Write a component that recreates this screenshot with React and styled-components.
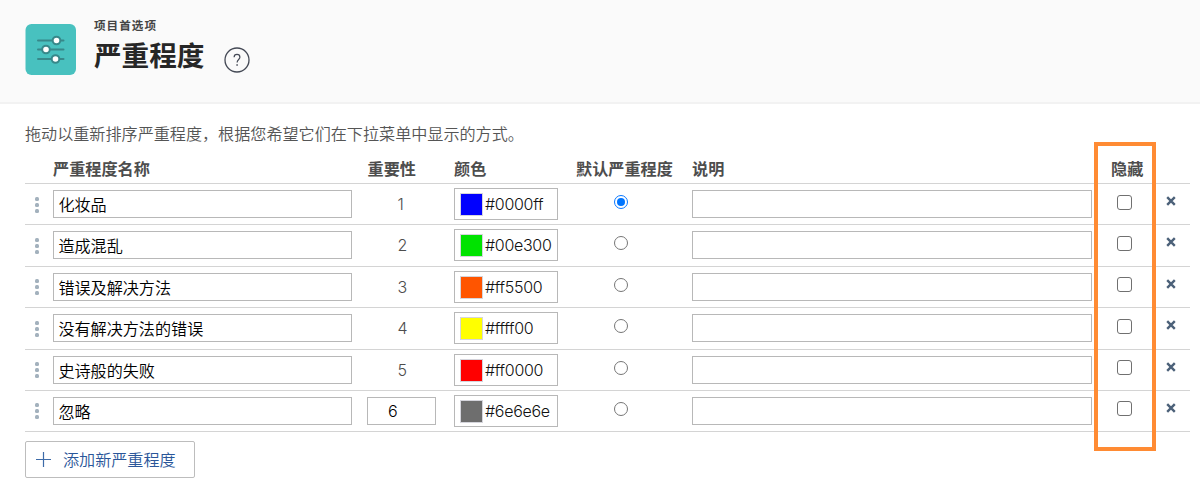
import React from "react";
import styled, { createGlobalStyle } from "styled-components";

const GlobalStyle = createGlobalStyle`
  *, *::before, *::after { box-sizing: border-box; }
  body {
    margin: 0;
    background: #fff;
    color: #4d4d4d;
    font-family: Inter, "Noto Sans CJK SC", sans-serif;
    font-size: 16px;
    line-height: 20px;
  }
`;

const Page = styled.div`
  width: 1200px;
  height: 501px;
  overflow: hidden;
`;

const Header = styled.header`
  display: flex;
  align-items: flex-start;
  height: 104px;
  padding: 24px 0 0 25px;
  background: #fafafa;
  border-bottom: 2px solid #f2f2f2;
`;

const AppIcon = styled.svg`
  display: block;
  width: 51px;
  height: 51px;
  margin-right: 18px;
`;

const Titles = styled.div`
  display: flex;
  flex-direction: column;
  margin-top: -6px;
  color: #262626;
`;

const Overline = styled.div`
  font-size: 11.6px;
  line-height: 16px;
  font-weight: 600;
  letter-spacing: 1px;
  color: #444;
`;

const Title = styled.h1`
  margin: 1px 0 0;
  font-size: 27.6px;
  line-height: 42px;
  font-weight: 700;
`;

const HelpIcon = styled.svg`
  display: block;
  width: 26px;
  height: 26px;
  margin: 22.5px 0 0 19.6px;
`;

const Content = styled.main`
  padding: 19px 10px 0 25px;
`;

const Intro = styled.p`
  margin: 0;
  line-height: 22px;
  font-size: 16.1px;
  font-weight: 350;
  color: #555;
`;

const gridColumns = "28px 299px 102px 122px 91px 25px 400px 65px 33px";

const HeadRow = styled.div`
  display: grid;
  grid-template-columns: ${gridColumns};
  height: 39px;
  padding-top: 14px;
  border-bottom: 1px solid #d4d4d4;
  font-weight: 700;
  font-size: 16.15px;
  white-space: nowrap;
`;

const HeadCell = styled.div`
  grid-column: ${(p) => p.$column};
  padding-left: ${(p) => p.$indent || 0}px;
`;

const Row = styled.div`
  display: grid;
  grid-template-columns: ${gridColumns};
  align-items: start;
  height: 41.4px;
  padding-top: 4px;
  border-bottom: 1px solid #d4d4d4;
`;

const Handle = styled.div`
  display: flex;
  flex-direction: column;
  gap: 2px;
  padding: 8.5px 0 0 9.5px;
`;

const HandleDot = styled.i`
  width: 4px;
  height: 4px;
  border-radius: 1.5px;
  background: #a3b1bd;
`;

const Field = styled.div`
  height: 28px;
  margin-top: 2px;
  padding: 4px 4.4px 0;
  border: 1px solid #b8b8b8;
  color: #000;
  font-size: 16.1px;
  font-weight: 350;
  line-height: 20px;
`;

const Importance = styled.div`
  padding: 6px 0 0 45.5px;
  line-height: 20px;
  font-weight: 350;
`;

const ImportanceField = styled(Field)`
  width: 69px;
  margin-left: 15px;
  padding: 3px 0 0 20px;
`;

const ColorField = styled.div`
  display: flex;
  align-items: center;
  width: 104px;
  height: 32px;
  padding-left: 5px;
  border: 1px solid #b8b8b8;
  color: #111;
  font-weight: 350;
  letter-spacing: -0.3px;
`;

const Swatch = styled.span`
  width: 23px;
  height: 23px;
  margin: 1px 2px 0 0;
  border: 1px solid #d5d5dc;
  background: ${(p) => p.$color};
`;

const Radio = styled.span`
  display: grid;
  place-items: center;
  width: 14px;
  height: 14px;
  margin: 7px 0 0 38.4px;
  border: 1px solid ${(p) => (p.$checked ? "#0a78ff" : "#767676")};
  border-radius: 50%;

  &::after {
    content: "";
    width: 8px;
    height: 8px;
    border-radius: 50%;
    background: ${(p) => (p.$checked ? "#0075ff" : "transparent")};
  }
`;

const DescriptionField = styled(Field)`
  grid-column: 7;
`;

const Checkbox = styled.span`
  width: 15px;
  height: 15px;
  margin: 6.5px 0 0 25px;
  border: 1px solid #707070;
  border-radius: 3px;
`;

const RemoveIcon = styled.svg`
  width: 10px;
  height: 10px;
  margin: 8px 0 0 9px;
`;

const AddButton = styled.button`
  display: flex;
  align-items: center;
  width: 170px;
  height: 37px;
  margin-top: 9px;
  padding: 0 0 0 10px;
  border: 1px solid #bdbdbd;
  border-radius: 2px;
  background: #fff;
  color: #2a5699;
  font: inherit;
  font-size: 16.1px;
  font-weight: 350;
  white-space: nowrap;
`;

const PlusIcon = styled.svg`
  width: 15px;
  height: 15px;
  margin-right: 12px;
`;

const Highlight = styled.div`
  position: absolute;
  left: 1094px;
  top: 142px;
  width: 62px;
  height: 309px;
  border: 4px solid #ff8b33;
`;

const severities = [
  { name: "化妆品", color: "#0000ff" },
  { name: "造成混乱", color: "#00e300" },
  { name: "错误及解决方法", color: "#ff5500" },
  { name: "没有解决方法的错误", color: "#ffff00" },
  { name: "史诗般的失败", color: "#ff0000" },
  { name: "忽略", color: "#6e6e6e", editable: true },
];

function SeverityRow({ item, index }) {
  return (
    <Row>
      <Handle>
        <HandleDot />
        <HandleDot />
        <HandleDot />
      </Handle>
      <Field>{item.name}</Field>
      {item.editable ? (
        <ImportanceField>{index + 1}</ImportanceField>
      ) : (
        <Importance>{index + 1}</Importance>
      )}
      <ColorField>
        <Swatch $color={item.color} />
        {item.color}
      </ColorField>
      <Radio $checked={index === 0} />
      <DescriptionField />
      <Checkbox />
      <RemoveIcon viewBox="0 0 10 10">
        <path d="M1.2 1.2L8.8 8.8M8.8 1.2L1.2 8.8" stroke="#4c6179" strokeWidth="2.4" />
      </RemoveIcon>
    </Row>
  );
}

export default function App() {
  return (
    <Page>
      <GlobalStyle />
      <Header>
        <AppIcon viewBox="0 0 51 51">
          <rect x="0.5" width="50.5" height="51" rx="6" fill="#48c1bf" />
          <g stroke="#37888a" strokeWidth="2" strokeLinecap="round">
            <path d="M13 16.5H38.5M13 25.5H38.5M13 35H38.5" />
          </g>
          <g fill="#fff" stroke="#37888a" strokeWidth="2">
            <circle cx="31.5" cy="16.5" r="3.8" />
            <circle cx="21" cy="25.5" r="3.8" />
            <circle cx="30.5" cy="35" r="3.8" />
          </g>
        </AppIcon>
        <Titles>
          <Overline>项目首选项</Overline>
          <Title>严重程度</Title>
        </Titles>
        <HelpIcon viewBox="0 0 26 26" fill="none" stroke="#444955">
          <circle cx="13" cy="13" r="12" strokeWidth="1.3" />
          <path d="M10.1 10.2C10.1 8.4 11.4 7.4 13 7.4s2.9 1.1 2.9 2.8c0 2.2-2.8 2.5-2.8 5.3" strokeWidth="1.2" />
          <path d="M13.1 17.2v1.6" strokeWidth="1.5" />
        </HelpIcon>
      </Header>
      <Content>
        <Intro>拖动以重新排序严重程度，根据您希望它们在下拉菜单中显示的方式。</Intro>
        <HeadRow>
          <HeadCell $column={2}>严重程度名称</HeadCell>
          <HeadCell $column={3} $indent={15.5}>重要性</HeadCell>
          <HeadCell $column={4}>颜色</HeadCell>
          <HeadCell $column={5}>默认严重程度</HeadCell>
          <HeadCell $column={7}>说明</HeadCell>
          <HeadCell $column={8} $indent={19}>隐藏</HeadCell>
        </HeadRow>
        {severities.map((item, index) => (
          <SeverityRow key={item.name} item={item} index={index} />
        ))}
        <AddButton>
          <PlusIcon viewBox="0 0 15 15">
            <path d="M7.5 0V15M0 7.5H15" stroke="#3d6ba8" strokeWidth="1.2" />
          </PlusIcon>
          添加新严重程度
        </AddButton>
      </Content>
      <Highlight />
    </Page>
  );
}
